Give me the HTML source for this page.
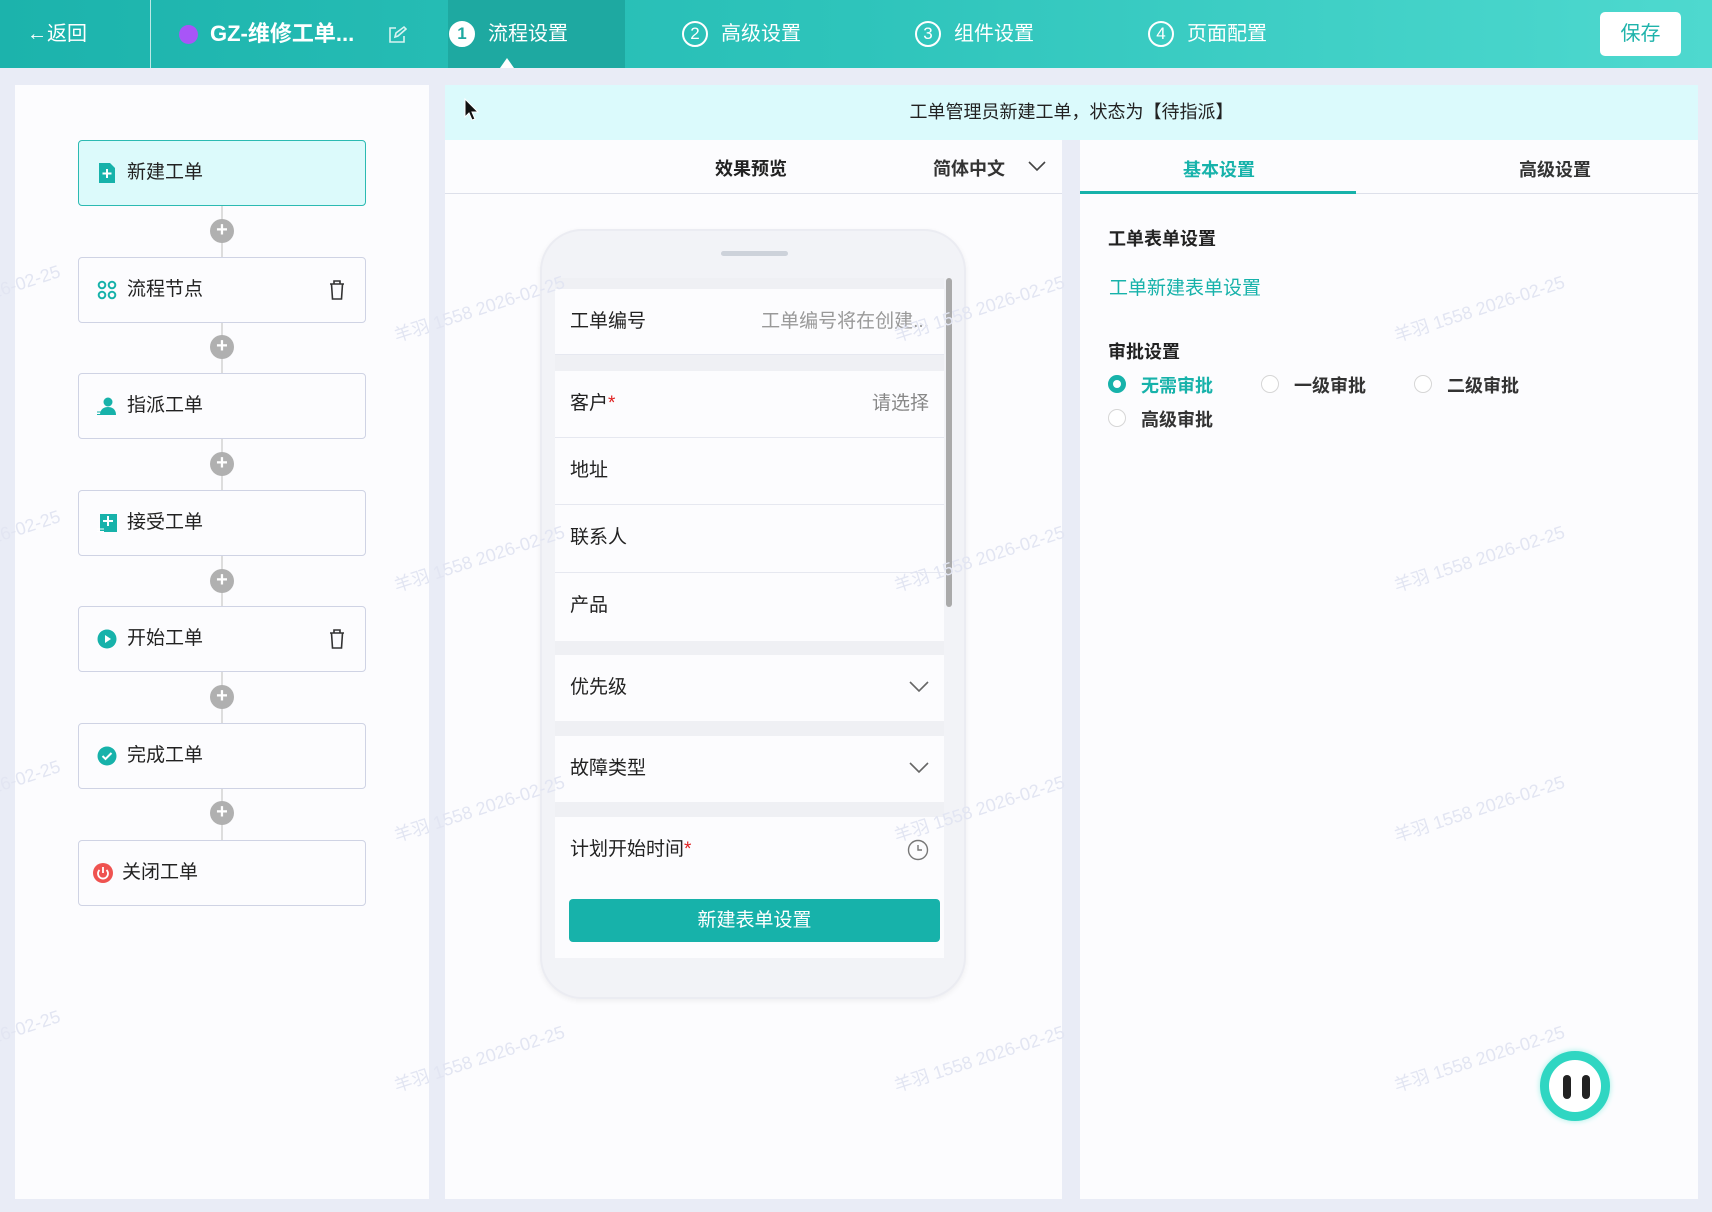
<!DOCTYPE html>
<html><head><meta charset="utf-8"><style>
*{box-sizing:border-box;margin:0;padding:0}
body{width:1712px;height:1212px;overflow:hidden;background:#e9ecf6;font-family:"Liberation Sans","Noto Sans CJK SC",sans-serif;color:#222;position:relative}
.abs{position:absolute}
.hdr{left:0;top:0;width:1712px;height:68px;background:linear-gradient(90deg,#1cb3ac,#2ec4bb 50%,#4ed9cf)}
.hw{color:#fff;font-size:20px;line-height:68px;top:0;white-space:nowrap}
.step{width:26px;height:26px;border:2px solid #fff;border-radius:50%;top:21px;color:#fff;font-size:17px;line-height:22px;text-align:center}
.panel{background:#fcfcfe}
.node{left:78px;width:288px;height:66px;border:1.5px solid #cfd3e4;border-radius:4px;background:#fcfcfe}
.node .t{position:absolute;left:48px;top:0;line-height:63px;font-size:19px;color:#222}
.node .ic{position:absolute;left:18px;top:22px;width:20px;height:20px}
.plus{left:210px;width:24px;height:24px;border-radius:50%;background:#b0b0b0;color:#fff;text-align:center;line-height:23px;font-size:20px;font-weight:bold}
.vl{left:221px;width:2px;background:#ddd}
.row{left:555px;width:389px;background:#fcfcfe;border-bottom:1px solid #e6e8f0}
.row .l{position:absolute;left:15px;top:0;font-size:19px;color:#222}
.row .r{position:absolute;right:15px;top:0;font-size:19px;color:#888}
.wm{color:#e2e5f2;font-size:18px;transform:rotate(-18deg);white-space:nowrap}
.radio{width:18px;height:18px;border-radius:50%;border:1.5px solid #d6d6d6;background:#fff}
.rt{font-size:18px;color:#333;font-weight:bold}
</style></head><body>
<div class="abs hdr"></div>
<div class="abs" style="left:448px;top:0;width:177px;height:68px;background:#1ea9a1"></div>
<div class="abs" style="left:500px;top:58px;width:0;height:0;border-left:7px solid transparent;border-right:7px solid transparent;border-bottom:10px solid #fff"></div>
<div class="abs hw" style="left:27px">←返回</div>
<div class="abs" style="left:150px;top:0;width:1px;height:68px;background:rgba(255,255,255,.7)"></div>
<div class="abs" style="left:179px;top:25px;width:19px;height:19px;border-radius:50%;background:#a855f7"></div>
<div class="abs hw" style="left:210px;font-size:22px;font-weight:600">GZ-维修工单...</div>
<svg class="abs" style="left:387px;top:25px" width="20" height="20" viewBox="0 0 20 20"><path d="M9 3H3v14h14v-6M8 12l1-4 8-6 2 2-8 7z" fill="none" stroke="#d8f3f1" stroke-width="1.6"/></svg>
<div class="abs step" style="left:449px;background:#fff;color:#1ea9a1;font-weight:bold">1</div>
<div class="abs hw" style="left:488px">流程设置</div>
<div class="abs step" style="left:682px">2</div><div class="abs hw" style="left:721px">高级设置</div>
<div class="abs step" style="left:915px">3</div><div class="abs hw" style="left:954px">组件设置</div>
<div class="abs step" style="left:1148px">4</div><div class="abs hw" style="left:1187px">页面配置</div>
<div class="abs" style="left:1600px;top:12px;width:81px;height:44px;background:#fff;border-radius:5px;color:#1eb3ab;font-size:20px;text-align:center;line-height:44px">保存</div>

<div class="abs panel" style="left:15px;top:85px;width:414px;height:1114px"></div>
<div class="abs vl" style="top:205px;height:635px"></div>
<div class="abs node" style="top:140px;background:#dcfafb;border-color:#2cbab2">
<svg class="ic" viewBox="0 0 20 20"><path d="M2 0h11l5 5v15H2z" fill="#17b2aa"/><path d="M10 6v9M5.5 10.5h9" stroke="#fff" stroke-width="2"/></svg><div class="t">新建工单</div></div>
<div class="abs node" style="top:257px"><svg class="ic" viewBox="0 0 20 20"><g fill="none" stroke="#17b2aa" stroke-width="2"><circle cx="5" cy="5" r="3.3"/><circle cx="15" cy="5" r="3.3"/><circle cx="5" cy="15" r="3.3"/><circle cx="15" cy="15" r="3.3"/></g></svg><div class="t">流程节点</div>
<svg class="abs" style="left:249px;top:22px" width="18" height="20" viewBox="0 0 18 20"><path d="M2 4h14M6 4V1h6v3M3.5 4l1 15h9l1-15" fill="none" stroke="#333" stroke-width="1.6"/></svg></div>
<div class="abs node" style="top:373px"><svg class="ic" viewBox="0 0 20 20"><circle cx="11" cy="6" r="4.5" fill="#17b2aa"/><path d="M3 19c0-6 4-8 8-8s8 2 8 8z" fill="#17b2aa"/><path d="M0 16h5M0 18.5h5" stroke="#17b2aa" stroke-width="1"/></svg><div class="t">指派工单</div></div>
<div class="abs node" style="top:490px"><svg class="ic" viewBox="0 0 20 20"><rect x="3" y="1" width="17" height="18" fill="#17b2aa"/><path d="M11 3v10M6 8h10" stroke="#fff" stroke-width="2"/><path d="M0 16h7M0 18.5h7" stroke="#fff" stroke-width="1"/></svg><div class="t">接受工单</div></div>
<div class="abs node" style="top:606px"><svg class="ic" viewBox="0 0 20 20"><circle cx="10" cy="10" r="9.5" fill="#17b2aa"/><path d="M8 6v8l6-4z" fill="#fff"/></svg><div class="t">开始工单</div>
<svg class="abs" style="left:249px;top:22px" width="18" height="20" viewBox="0 0 18 20"><path d="M2 4h14M6 4V1h6v3M3.5 4l1 15h9l1-15" fill="none" stroke="#333" stroke-width="1.6"/></svg></div>
<div class="abs node" style="top:723px"><svg class="ic" viewBox="0 0 20 20"><circle cx="10" cy="10" r="9.5" fill="#17b2aa"/><path d="M5.5 10l3 3 6-6" fill="none" stroke="#fff" stroke-width="2"/></svg><div class="t">完成工单</div></div>
<div class="abs node" style="top:840px"><svg class="ic" style="left:14px" viewBox="0 0 20 20"><circle cx="10" cy="10" r="10" fill="#ef5350"/><path d="M10 4v6M6.5 7a5 5 0 1 0 7 0" fill="none" stroke="#fff" stroke-width="1.8"/></svg><div class="t" style="left:43px">关闭工单</div></div>
<div class="abs plus" style="top:219px">+</div><div class="abs plus" style="top:335px">+</div><div class="abs plus" style="top:452px">+</div><div class="abs plus" style="top:569px">+</div><div class="abs plus" style="top:685px">+</div><div class="abs plus" style="top:801px">+</div>

<div class="abs panel" style="left:445px;top:85px;width:617px;height:1114px"></div>
<div class="abs panel" style="left:1080px;top:85px;width:618px;height:1114px"></div>
<div class="abs" style="left:445px;top:85px;width:1253px;height:55px;background:#dbfafc;text-align:center;line-height:55px;font-size:18px;color:#222">工单管理员新建工单，状态为【待指派】</div>
<svg class="abs" style="left:464px;top:98px" width="16" height="24" viewBox="0 0 16 24"><path d="M1 1v18l4-4 3 7 3-1-3-7h6z" fill="#111" stroke="#fff" stroke-width="1"/></svg>
<div class="abs" style="left:445px;top:193px;width:617px;height:1px;background:#dde0ea"></div>
<div class="abs" style="left:715px;top:155px;font-size:18px;font-weight:bold">效果预览</div>
<div class="abs" style="left:933px;top:155px;font-size:18px;font-weight:bold;color:#333">简体中文</div>
<svg class="abs" style="left:1028px;top:160px" width="18" height="12" viewBox="0 0 18 12"><path d="M1 2l8 8 8-8" fill="none" stroke="#444" stroke-width="1.6"/></svg>
<div class="abs" style="left:540px;top:229px;width:426px;height:770px;border-radius:42px;background:#f2f3f7;border:2px solid #ebecf2;box-shadow:0 2px 6px rgba(0,0,0,.06)"></div>
<div class="abs" style="left:721px;top:251px;width:67px;height:5px;border-radius:3px;background:#cdd2da"></div>
<div class="abs" style="left:555px;top:278px;width:389px;height:680px;background:#eff0f4"></div>
<div class="abs" style="left:946px;top:278px;width:6px;height:329px;border-radius:3px;background:#aaa"></div>
<div class="abs row" style="top:289px;height:66px;line-height:66px"><span class="l">工单编号</span><span class="r" style="color:#999">工单编号将在创建...</span></div>
<div class="abs row" style="top:371px;height:67px;line-height:66px"><span class="l">客户<span style="color:#e02020">*</span></span><span class="r">请选择</span></div>
<div class="abs row" style="top:438px;height:67px;line-height:66px"><span class="l">地址</span></div>
<div class="abs row" style="top:505px;height:68px;line-height:66px"><span class="l">联系人</span></div>
<div class="abs row" style="top:573px;height:68px;line-height:66px;border:0"><span class="l">产品</span></div>
<div class="abs row" style="top:655px;height:66px;line-height:66px;border:0"><span class="l">优先级</span><svg class="abs" style="right:15px;top:26px" width="20" height="12" viewBox="0 0 20 12"><path d="M1 1l9 9 9-9" fill="none" stroke="#666" stroke-width="1.6"/></svg></div>
<div class="abs row" style="top:736px;height:66px;line-height:66px;border:0"><span class="l">故障类型</span><svg class="abs" style="right:15px;top:26px" width="20" height="12" viewBox="0 0 20 12"><path d="M1 1l9 9 9-9" fill="none" stroke="#666" stroke-width="1.6"/></svg></div>
<div class="abs row" style="top:817px;height:67px;line-height:66px;border:0"><span class="l">计划开始时间<span style="color:#e02020">*</span></span><svg class="abs" style="right:15px;top:22px" width="22" height="22" viewBox="0 0 22 22"><circle cx="11" cy="11" r="9.5" fill="none" stroke="#777" stroke-width="1.4"/><path d="M11 6v5h4" fill="none" stroke="#777" stroke-width="1.4"/></svg></div>
<div class="abs" style="left:555px;top:884px;width:389px;height:74px;background:#fcfcfe"></div>
<div class="abs" style="left:569px;top:899px;width:371px;height:43px;background:#17b2aa;border-radius:4px;color:#fff;font-size:19px;text-align:center;line-height:43px">新建表单设置</div>

<div class="abs" style="left:1080px;top:193px;width:618px;height:1px;background:#dde0ea"></div>
<div class="abs" style="left:1080px;top:191px;width:276px;height:3px;background:#17b2aa"></div>
<div class="abs" style="left:1183px;top:156px;font-size:18px;font-weight:bold;color:#17b2aa">基本设置</div>
<div class="abs" style="left:1519px;top:156px;font-size:18px;font-weight:bold;color:#333">高级设置</div>
<div class="abs" style="left:1108px;top:225px;font-size:18px;font-weight:bold">工单表单设置</div>
<div class="abs" style="left:1109px;top:273px;font-size:19px;color:#17b2aa">工单新建表单设置</div>
<div class="abs" style="left:1108px;top:338px;font-size:18px;font-weight:bold">审批设置</div>
<div class="abs radio" style="left:1108px;top:375px;border:5px solid #17b2aa"></div><div class="abs rt" style="left:1141px;top:372px;color:#17b2aa">无需审批</div>
<div class="abs radio" style="left:1261px;top:375px"></div><div class="abs rt" style="left:1294px;top:372px">一级审批</div>
<div class="abs radio" style="left:1414px;top:375px"></div><div class="abs rt" style="left:1447px;top:372px">二级审批</div>
<div class="abs radio" style="left:1108px;top:409px"></div><div class="abs rt" style="left:1141px;top:406px">高级审批</div>
<div class="abs" style="left:1540px;top:1051px;width:70px;height:70px;border-radius:50%;background:#fff;border:9px solid #2fd6c2;box-shadow:0 0 6px #9ff0e6"></div>
<div class="abs" style="left:1563px;top:1075px;width:8px;height:24px;border-radius:4px;background:#222"></div>
<div class="abs" style="left:1582px;top:1075px;width:8px;height:24px;border-radius:4px;background:#222"></div>

<div class="abs wm" style="left:-30px;top:275px">2026-02-25</div>
<div class="abs wm" style="left:-30px;top:520px">2026-02-25</div>
<div class="abs wm" style="left:-30px;top:770px">2026-02-25</div>
<div class="abs wm" style="left:-30px;top:1020px">2026-02-25</div>
<div class="abs wm" style="left:390px;top:295px">羊羽 1558 2026-02-25</div>
<div class="abs wm" style="left:390px;top:545px">羊羽 1558 2026-02-25</div>
<div class="abs wm" style="left:390px;top:795px">羊羽 1558 2026-02-25</div>
<div class="abs wm" style="left:390px;top:1045px">羊羽 1558 2026-02-25</div>
<div class="abs wm" style="left:890px;top:295px">羊羽 1558 2026-02-25</div>
<div class="abs wm" style="left:890px;top:545px">羊羽 1558 2026-02-25</div>
<div class="abs wm" style="left:890px;top:795px">羊羽 1558 2026-02-25</div>
<div class="abs wm" style="left:890px;top:1045px">羊羽 1558 2026-02-25</div>
<div class="abs wm" style="left:1390px;top:295px">羊羽 1558 2026-02-25</div>
<div class="abs wm" style="left:1390px;top:545px">羊羽 1558 2026-02-25</div>
<div class="abs wm" style="left:1390px;top:795px">羊羽 1558 2026-02-25</div>
<div class="abs wm" style="left:1390px;top:1045px">羊羽 1558 2026-02-25</div>
</body></html>
